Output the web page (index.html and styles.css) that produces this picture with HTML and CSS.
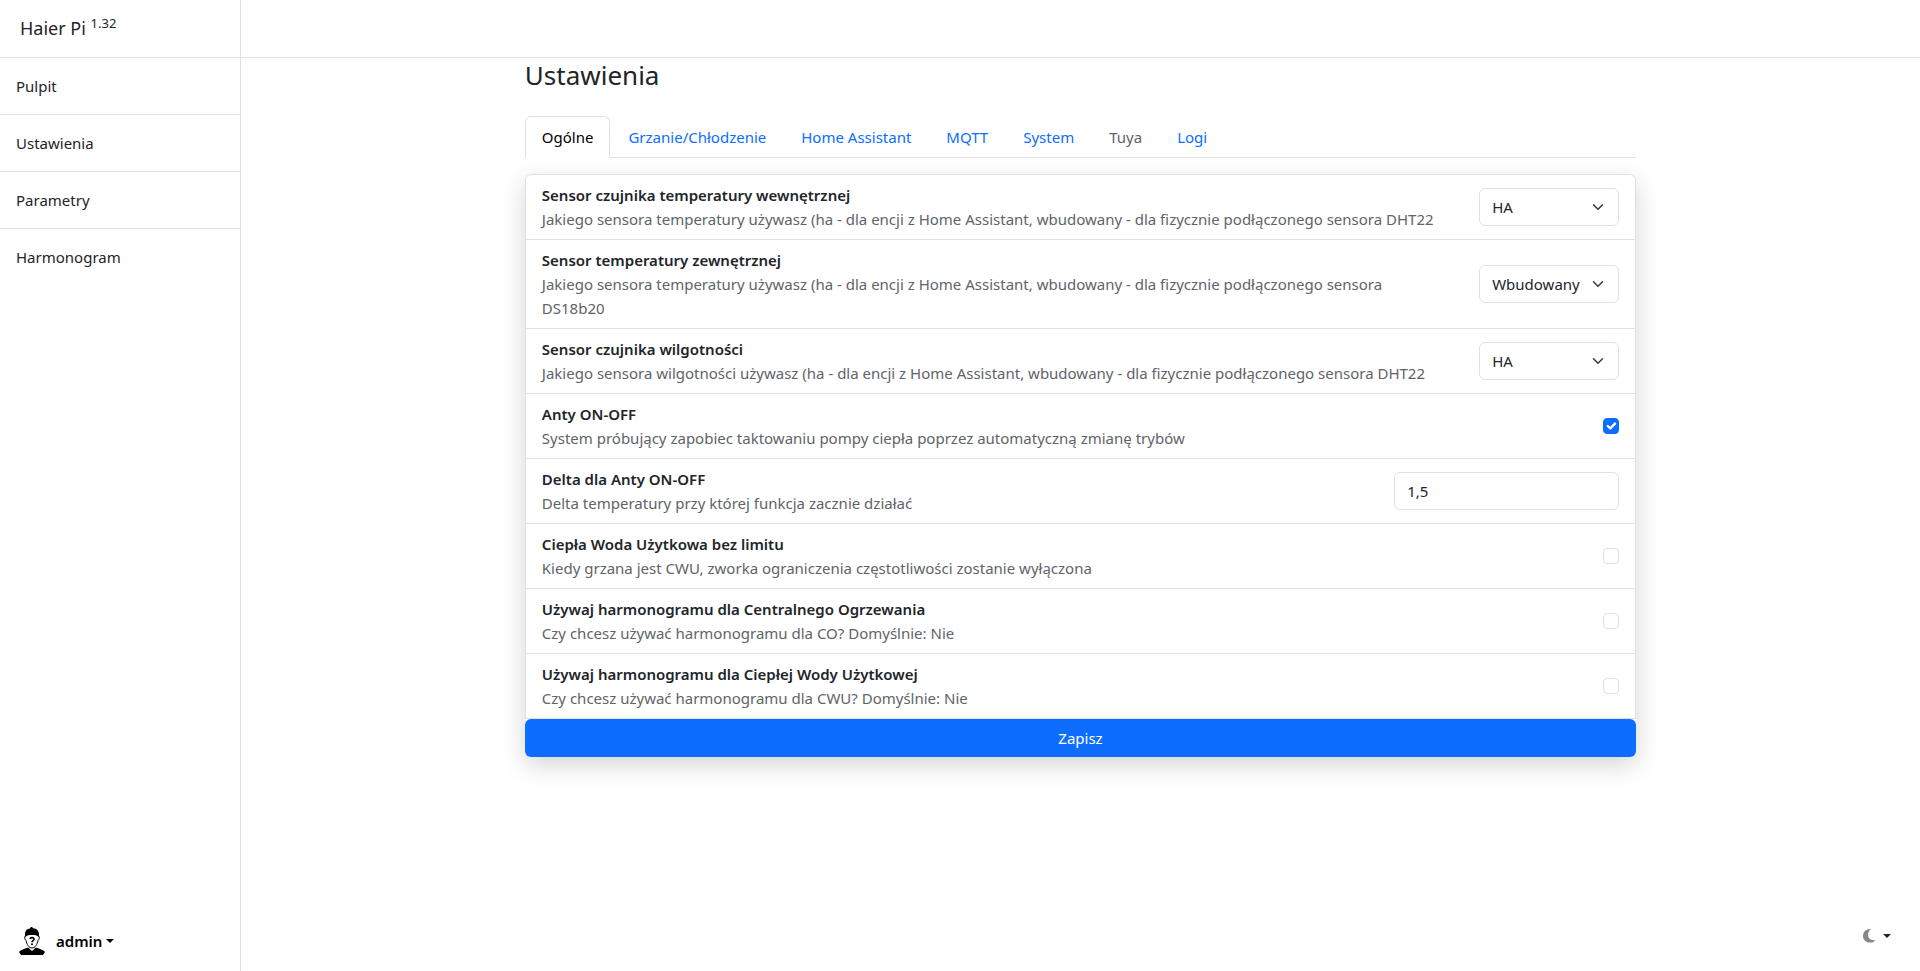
FILE: index.html
```html
<!DOCTYPE html>
<html lang="pl">
<head>
<meta charset="utf-8">
<title>Haier Pi</title>
<link rel="stylesheet" href="styles.css">
</head>
<body>
<div class="app">
  <aside class="sidebar">
    <a class="brand" href="#">Haier Pi <sup>1.32</sup></a>
    <nav class="menu">
      <a class="menu-item" href="#">Pulpit</a>
      <a class="menu-item" href="#">Ustawienia</a>
      <a class="menu-item" href="#">Parametry</a>
      <a class="menu-item" href="#">Harmonogram</a>
    </nav>
    <button class="user" type="button">
      <svg class="avatar" viewBox="0 0 32 32" aria-hidden="true">
        <path d="M3 27c2-2.500 5-3 9-4.500l4 3.500 4-3.500c4 1.500 7 2 9 4.500l-2 3H5z" fill="#000"/>
        <path d="M9.500 11c-1.200 0-1.200 3.500.5 4.200C10.700 19.500 13 23 16 23s5.300-3.500 6-7.800c1.700-.7 1.700-4.200.5-4.200" fill="#fff" stroke="#000" stroke-width="1"/>
        <path d="M9.200 12.500C8.200 6 10.500 4 14 3.500c1-2.300 2.500-1.500 3-.3 5 .5 6.800 3.500 5.800 9.300-1-2.200-3-2.500-6.800-2.500s-5.800.3-6.800 2.500z" fill="#000"/>
        <path d="M14 14c.3-2 4.200-1.800 4 .2-.1 1.500-2 1.400-2 3" fill="none" stroke="#000" stroke-width="1.600"/>
        <circle cx="16" cy="19.200" r="1"/>
      </svg>
      <span>admin</span>
      <span class="caret"></span>
    </button>
  </aside>
  <div class="page">
    <header class="topbar"></header>
    <main class="main">
      <div class="content">
        <h1 class="title">Ustawienia</h1>
        <nav class="tabs">
          <button class="tab active" type="button">Ogólne</button>
          <button class="tab" type="button">Grzanie/Chłodzenie</button>
          <button class="tab" type="button">Home Assistant</button>
          <button class="tab" type="button">MQTT</button>
          <button class="tab" type="button">System</button>
          <button class="tab" type="button" disabled>Tuya</button>
          <button class="tab" type="button">Logi</button>
        </nav>
        <form class="card">
          <div class="rows">
            <div class="row">
              <label class="text" for="inside"><strong>Sensor czujnika temperatury wewnętrznej</strong><span>Jakiego sensora temperatury używasz (ha - dla encji z Home Assistant, wbudowany - dla fizycznie podłączonego sensora DHT22</span></label>
              <span class="select-wrap"><select class="control" id="inside"><option>HA</option><option>Wbudowany</option></select><svg class="chevron" viewBox="0 0 16 16" aria-hidden="true"><path d="m2 5 6 6 6-6"/></svg></span>
            </div>
            <div class="row">
              <label class="text" for="outside"><strong>Sensor temperatury zewnętrznej</strong><span>Jakiego sensora temperatury używasz (ha - dla encji z Home Assistant, wbudowany - dla fizycznie podłączonego sensora DS18b20</span></label>
              <span class="select-wrap"><select class="control" id="outside"><option>HA</option><option selected>Wbudowany</option></select><svg class="chevron" viewBox="0 0 16 16" aria-hidden="true"><path d="m2 5 6 6 6-6"/></svg></span>
            </div>
            <div class="row">
              <label class="text" for="humidity"><strong>Sensor czujnika wilgotności</strong><span>Jakiego sensora wilgotności używasz (ha - dla encji z Home Assistant, wbudowany - dla fizycznie podłączonego sensora DHT22</span></label>
              <span class="select-wrap"><select class="control" id="humidity"><option>HA</option><option>Wbudowany</option></select><svg class="chevron" viewBox="0 0 16 16" aria-hidden="true"><path d="m2 5 6 6 6-6"/></svg></span>
            </div>
            <div class="row">
              <label class="text" for="anty"><strong>Anty ON-OFF</strong><span>System próbujący zapobiec taktowaniu pompy ciepła poprzez automatyczną zmianę trybów</span></label>
              <span class="check-wrap"><input class="check" id="anty" type="checkbox" checked><svg class="tick" viewBox="0 0 20 20" aria-hidden="true"><path d="m6 10 3 3 6-6"/></svg></span>
            </div>
            <div class="row">
              <label class="text" for="delta"><strong>Delta dla Anty ON-OFF</strong><span>Delta temperatury przy której funkcja zacznie działać</span></label>
              <input class="control number" id="delta" type="text" inputmode="decimal" value="1,5">
            </div>
            <div class="row">
              <label class="text" for="dhw"><strong>Ciepła Woda Użytkowa bez limitu</strong><span>Kiedy grzana jest CWU, zworka ograniczenia częstotliwości zostanie wyłączona</span></label>
              <span class="check-wrap"><input class="check" id="dhw" type="checkbox"></span>
            </div>
            <div class="row">
              <label class="text" for="sched-co"><strong>Używaj harmonogramu dla Centralnego Ogrzewania</strong><span>Czy chcesz używać harmonogramu dla CO? Domyślnie: Nie</span></label>
              <span class="check-wrap"><input class="check" id="sched-co" type="checkbox"></span>
            </div>
            <div class="row">
              <label class="text" for="sched-cwu"><strong>Używaj harmonogramu dla Ciepłej Wody Użytkowej</strong><span>Czy chcesz używać harmonogramu dla CWU? Domyślnie: Nie</span></label>
              <span class="check-wrap"><input class="check" id="sched-cwu" type="checkbox"></span>
            </div>
          </div>
          <button class="save" type="button">Zapisz</button>
        </form>
      </div>
    </main>
  </div>
</div>
<button class="theme" type="button" aria-label="Motyw">
  <svg class="moon" viewBox="0 0 16 16" aria-hidden="true"><path d="M10 1C4.500.500 1 4 1 8.500S5 16 9.500 15.500c2 0 3.500-1 4.500-2.500-5 .5-7.500-2-7.500-6C6.500 4.500 7.500 2.300 10 1z"/></svg>
  <span class="caret"></span>
</button>
</body>
</html>
```
FILE: styles.css
```css
*, *::before, *::after { box-sizing: border-box; }
body {
  margin: 0;
  font: 15px/24px "Noto Sans", "Open Sans", sans-serif;
  color: #212529;
  background: #fff;
}
button, input, select { font: inherit; color: inherit; margin: 0; }
a { color: inherit; text-decoration: none; }
button { border: 0; background: none; cursor: pointer; }

.app { display: flex; min-height: 100vh; }
.sidebar {
  flex: 0 0 241px;
  display: flex;
  flex-direction: column;
  border-right: 1px solid #dee2e6;
}
.brand {
  height: 58px;
  padding: 13px 20px;
  border-bottom: 1px solid #dee2e6;
  font-size: 18px;
  line-height: 30px;
}
.brand sup { font-size: 13px; line-height: 0; vertical-align: 7px; }
.menu { display: flex; flex-direction: column; }
.menu-item { padding: 16px; border-bottom: 1px solid #dee2e6; }
.menu-item:last-child { border-bottom: 0; }
.user {
  display: flex;
  align-items: center;
  margin-top: auto;
  padding: 0 16px 14px;
  font-weight: 600;
  color: #000;
}
.avatar { width: 32px; height: 32px; margin-right: 8px; }
.caret {
  margin-left: 4px;
  border: 4px solid transparent;
  border-top-color: currentColor;
  border-bottom: 0;
}

.page { flex: 1; min-width: 0; }
.topbar { height: 58px; border-bottom: 1px solid #dee2e6; }
.main { padding: 0 6px; }
.content { width: 66.6667%; margin: 0 auto; }
.title { margin: 0 0 24px; font-size: 26px; font-weight: 400; line-height: 34px; }
.tabs { display: flex; gap: 1px; border-bottom: 1px solid #dee2e6; margin-bottom: 16px; }
.tab {
  padding: 8px 16px;
  margin-bottom: -1px;
  border: 1px solid transparent;
  border-radius: 6px 6px 0 0;
  color: #0d6efd;
}
.tab.active { color: #000; background: #fff; border-color: #dee2e6 #dee2e6 #fff; }
.tab:disabled { color: #606468; }

.card { border-radius: 6px; box-shadow: 0 8px 24px rgba(0, 0, 0, .17); background: #fff; }
.rows { border: 1px solid #dee2e6; border-bottom: 0; border-radius: 6px 6px 0 0; }
.row {
  display: flex;
  align-items: center;
  justify-content: space-between;
  gap: 32px;
  padding: 8px 16px;
  border-bottom: 1px solid #dee2e6;
}
.text { display: flex; flex-direction: column; }
.text strong { font-weight: 600; }
.text span { color: #606468; }
.control {
  height: 38px;
  padding: 6px 12px;
  border: 1px solid #dee2e6;
  border-radius: 6px;
  background: #fff;
}
.select-wrap { display: grid; flex: 0 0 140px; align-items: center; }
.select-wrap > * { grid-area: 1 / 1; }
select.control { appearance: none; width: 100%; }
.chevron {
  width: 12px;
  height: 16px;
  margin-right: 15px;
  justify-self: end;
  pointer-events: none;
  fill: none;
  stroke: #343a40;
  stroke-width: 2;
  stroke-linecap: round;
  stroke-linejoin: round;
}
.number { width: 225px; flex: none; }
.check-wrap { display: grid; flex: none; }
.check-wrap > * { grid-area: 1 / 1; width: 16px; height: 16px; }
.check { appearance: none; border: 1px solid #dee2e6; border-radius: 4px; background: #fff; }
.check:checked { background: #0d6efd; border-color: #0d6efd; }
.tick {
  pointer-events: none;
  fill: none;
  stroke: #fff;
  stroke-width: 3;
  stroke-linecap: round;
  stroke-linejoin: round;
}
.save {
  display: block;
  width: 100%;
  padding: 7px 12px;
  border-radius: 6px;
  background: #0d6efd;
  color: #fff;
}
.theme {
  position: fixed;
  right: 29px;
  bottom: 24px;
  display: flex;
  align-items: center;
  padding: 4px 0;
}
.moon { width: 15px; height: 15px; margin-right: 2px; fill: #888; }
```
